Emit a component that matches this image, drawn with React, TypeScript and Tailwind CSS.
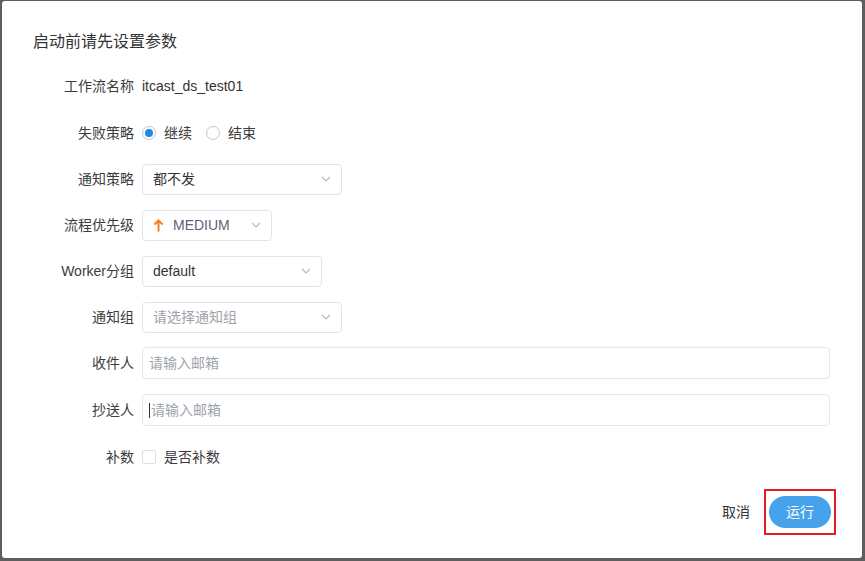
import { type ReactNode } from 'react';

const FONT = "font-['Liberation_Sans','Noto_Sans_CJK_SC',sans-serif]";

const Chevron = () => (
  <svg width="10" height="6" viewBox="0 0 10 6" className="shrink-0">
    <polyline
      points="1,1 5,5 9,1"
      fill="none"
      stroke="#b4b8bf"
      strokeWidth="1.2"
    />
  </svg>
);

const ArrowUp = () => (
  <svg width="11" height="13" viewBox="0 0 11 13" className="shrink-0">
    <path
      d="M5.5 12.5V1.5M1.5 5.5L5.5 1.5L9.5 5.5"
      fill="none"
      stroke="#f5801e"
      strokeWidth="2"
    />
  </svg>
);

const Row = ({
  label,
  className = '',
  children,
}: {
  label: string;
  className?: string;
  children: ReactNode;
}) => (
  <div className={`flex h-8 items-center ${className}`}>
    <label className="w-[140px] shrink-0 pr-[8px] text-right text-[14px] text-[#3c3c3c]">
      {label}
    </label>
    <div className="flex min-w-0 flex-1 items-center">{children}</div>
  </div>
);

const Select = ({
  width,
  children,
}: {
  width: string;
  children: ReactNode;
}) => (
  <div
    className={`flex h-[31px] items-center justify-between rounded-[4px] border border-[#e1e4ea] bg-white pr-[10px] pl-[10px] ${width}`}
  >
    <div className="flex items-center gap-[9px] text-[14px]">{children}</div>
    <Chevron />
  </div>
);

const Radio = ({ checked, label }: { checked?: boolean; label: string }) => (
  <span className="flex items-center gap-[8px]">
    <span className="flex h-[14px] w-[14px] items-center justify-center rounded-full border border-[#c2c6cc] bg-white">
      {checked && <span className="h-[8px] w-[8px] rounded-full bg-[#1e88e5]" />}
    </span>
    <span className="text-[14px] text-[#3c3c3c]">{label}</span>
  </span>
);

export default function App() {
  return (
    <div className={`h-[561px] w-[865px] bg-[#5e5e5e] pt-px pl-[2px] ${FONT}`}>
      <div className="flex h-[557px] w-[860px] flex-col rounded-[3px] bg-white">
        <h2 className="pt-[29px] pl-[31px] text-[16px] leading-6 text-[#333]">
          启动前请先设置参数
        </h2>

        <div className="mt-[16px] flex flex-col gap-[14px] pr-[32px]">
          <Row label="工作流名称">
            <span className="text-[14px] text-[#333]">itcast_ds_test01</span>
          </Row>
          <Row label="失败策略" className="mt-px">
            <div className="flex items-center gap-[14px]">
              <Radio checked label="继续" />
              <Radio label="结束" />
            </div>
          </Row>
          <Row label="通知策略">
            <Select width="w-[200px]">
              <span className="text-[#333]">都不发</span>
            </Select>
          </Row>
          <Row label="流程优先级">
            <Select width="w-[130px]">
              <ArrowUp />
              <span className="text-[#5b6475]">MEDIUM</span>
            </Select>
          </Row>
          <Row label="Worker分组">
            <Select width="w-[180px]">
              <span className="text-[#333]">default</span>
            </Select>
          </Row>
          <Row label="通知组">
            <Select width="w-[200px]">
              <span className="text-[#9ea3ab]">请选择通知组</span>
            </Select>
          </Row>
          <Row label="收件人">
            <div className="flex h-8 w-full items-center rounded-[4px] border border-[#e3e6ec] pl-[6px] text-[14px] text-[#9ea3ab]">
              请输入邮箱
            </div>
          </Row>
          <Row label="抄送人" className="mt-px">
            <div className="flex h-8 w-full items-center rounded-[4px] border border-[#e3e6ec] pl-[6px] text-[14px] text-[#9ea3ab]">
              <span className="mr-px h-[15px] w-px bg-[#333]" />
              请输入邮箱
            </div>
          </Row>
          <Row label="补数" className="mt-px">
            <span className="flex items-center gap-[8px]">
              <span className="h-[14px] w-[14px] rounded-[2px] border border-[#dcdfe5] bg-white" />
              <span className="text-[14px] text-[#3c3c3c]">是否补数</span>
            </span>
          </Row>
        </div>

        <div className="mt-auto flex items-center justify-end gap-[14px] pr-[26px] pb-[23px]">
          <button type="button" className="text-[14px] text-[#333]">
            取消
          </button>
          <span className="border-2 border-[#e31b23] px-[3px] py-[5px]">
            <button
              type="button"
              className="flex h-8 w-[62px] items-center justify-center rounded-full bg-[#46a3eb] text-[14px] text-white"
            >
              运行
            </button>
          </span>
        </div>
      </div>
    </div>
  );
}
